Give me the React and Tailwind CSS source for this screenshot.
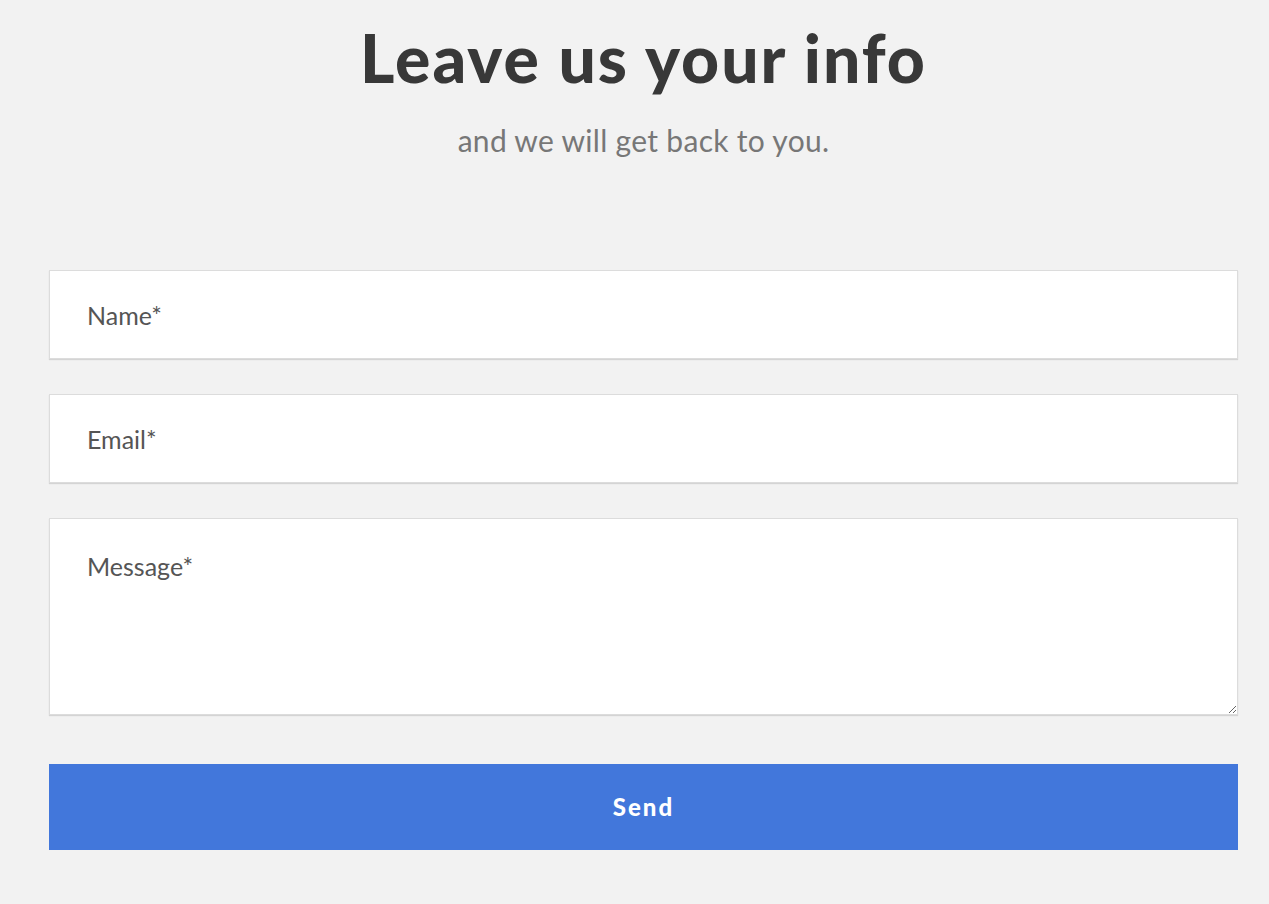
export default function App() {
  return (
    <div className="min-h-[904px] w-full bg-[#f2f2f2] pl-[49px] pr-[31px] font-['Lato',sans-serif]">
      <div className="pt-[18px] text-center">
        <h1 className="text-[66px] font-black leading-[80px] tracking-[2px] text-[#383838]">
          Leave us your info
        </h1>
        <p className="mt-[22px] text-[30px] font-normal leading-[40px] tracking-[0.3px] text-[#777]">
          and we will get back to you.
        </p>
      </div>

      <form className="mt-[110px] flex flex-col" onSubmit={(e) => e.preventDefault()}>
        <input
          type="text"
          placeholder="Name*"
          className="h-[89px] w-full border border-[#dcdcdc] bg-white px-[37px] text-[25px] text-[#555] shadow-[0_1px_1px_rgba(0,0,0,0.12)] outline-none placeholder:text-[#555]"
        />
        <input
          type="email"
          placeholder="Email*"
          className="mt-[35px] h-[89px] w-full border border-[#dcdcdc] bg-white px-[37px] text-[25px] text-[#555] shadow-[0_1px_1px_rgba(0,0,0,0.12)] outline-none placeholder:text-[#555]"
        />
        <textarea
          placeholder="Message*"
          className="mt-[35px] h-[197px] w-full resize-y border border-[#dcdcdc] bg-white px-[37px] pt-[32px] text-[25px] leading-[30px] text-[#555] shadow-[0_1px_1px_rgba(0,0,0,0.12)] outline-none placeholder:text-[#555]"
        />
        <button
          type="submit"
          className="mt-[49px] h-[86px] w-full bg-[#4277db] text-[24px] font-black tracking-[2px] text-white"
        >
          Send
        </button>
      </form>
    </div>
  );
}
